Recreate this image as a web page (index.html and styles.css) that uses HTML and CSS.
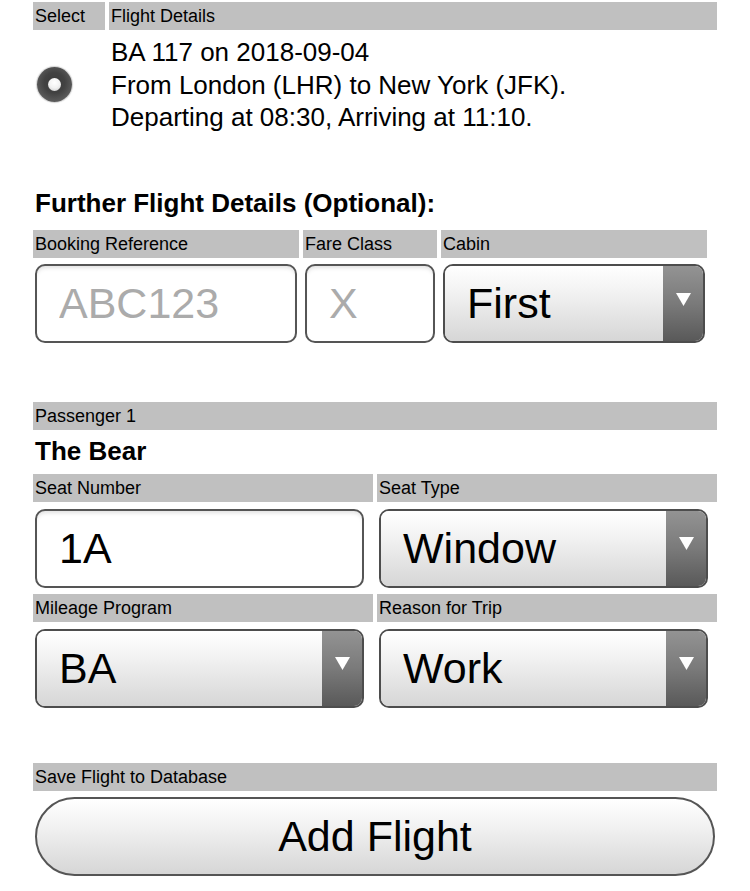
FILE: index.html
```html
<!DOCTYPE html>
<html>
<head>
<meta charset="utf-8">
<title>Add Flight</title>
<link rel="stylesheet" href="styles.css">
</head>
<body>
<div class="page">
  <div class="flight-table">
    <div class="label">Select</div>
    <div class="label">Flight Details</div>
    <div class="radio-cell"><span class="radio"><span class="radio-dot"></span></span></div>
    <div class="flight-text">BA 117 on 2018-09-04<br>From London (LHR) to New York (JFK).<br>Departing at 08:30, Arriving at 11:10.</div>
  </div>

  <h2 class="heading">Further Flight Details (Optional):</h2>
  <div class="further-grid">
    <div class="label">Booking Reference</div>
    <div class="label">Fare Class</div>
    <div class="label">Cabin</div>
    <div class="field"><input class="text-input" type="text" placeholder="ABC123"></div>
    <div class="field"><input class="text-input" type="text" placeholder="X"></div>
    <div class="field">
      <div class="select"><span class="select-value">First</span><span class="select-arrow"><svg width="15" height="13" viewBox="0 0 15 13"><polygon points="0,0 15,0 7.5,13" fill="#fff"/></svg></span></div>
    </div>
  </div>

  <div class="label passenger-bar">Passenger 1</div>
  <div class="passenger-name">The Bear</div>
  <div class="passenger-grid">
    <div class="label">Seat Number</div>
    <div class="label">Seat Type</div>
    <div class="field wide"><input class="text-input filled" type="text" value="1A"></div>
    <div class="field wide">
      <div class="select"><span class="select-value">Window</span><span class="select-arrow"><svg width="15" height="13" viewBox="0 0 15 13"><polygon points="0,0 15,0 7.5,13" fill="#fff"/></svg></span></div>
    </div>
    <div class="label">Mileage Program</div>
    <div class="label">Reason for Trip</div>
    <div class="field wide">
      <div class="select"><span class="select-value">BA</span><span class="select-arrow"><svg width="15" height="13" viewBox="0 0 15 13"><polygon points="0,0 15,0 7.5,13" fill="#fff"/></svg></span></div>
    </div>
    <div class="field wide">
      <div class="select"><span class="select-value">Work</span><span class="select-arrow"><svg width="15" height="13" viewBox="0 0 15 13"><polygon points="0,0 15,0 7.5,13" fill="#fff"/></svg></span></div>
    </div>
  </div>

  <div class="label save-bar">Save Flight to Database</div>
  <button class="add-button" type="button">Add Flight</button>
</div>
</body>
</html>
```

FILE: styles.css
```css
html, body {
  margin: 0;
  padding: 0;
  background: #ffffff;
}

body {
  font-family: "Liberation Sans", Helvetica, Arial, sans-serif;
  color: #000;
}

.page {
  width: 684px;
  padding: 2px 0 0 33px;
}

.label {
  background: #c0c0c0;
  height: 28px;
  line-height: 28px;
  font-size: 18px;
  padding-left: 2px;
  white-space: nowrap;
  overflow: hidden;
}

.flight-table {
  display: grid;
  grid-template-columns: 72px 608px;
  column-gap: 4px;
}

.radio-cell {
  display: flex;
  align-items: center;
  padding-top: 6px;
  padding-left: 4px;
}

.radio {
  width: 35px;
  height: 35px;
  border-radius: 50%;
  background: radial-gradient(circle at 50% 45%, #3a3a3a 0%, #424242 40%, #5e5e5e 75%, #808080 100%);
  box-shadow: 0 0 1px 1px rgba(190, 190, 190, 0.7);
  display: flex;
  align-items: center;
  justify-content: center;
}

.radio-dot {
  width: 13px;
  height: 13px;
  border-radius: 50%;
  background: radial-gradient(circle at 50% 35%, #ffffff 0%, #f2f2f2 50%, #c8c8c8 100%);
}

.flight-text {
  padding: 6px 0 0 2px;
  font-size: 26px;
  line-height: 32.5px;
}

.heading {
  margin: 53px 0 0 0;
  padding-left: 2px;
  font-size: 26px;
  font-weight: bold;
  line-height: 32.5px;
}

.further-grid {
  margin-top: 11px;
  display: grid;
  grid-template-columns: 266px 134px 266px;
  column-gap: 4px;
  row-gap: 6px;
}

.field {
  padding: 0 2px;
}

.field.wide {
  padding: 0 9px 0 2px;
}

.text-input {
  display: block;
  width: 100%;
  height: 79px;
  box-sizing: border-box;
  margin: 0;
  border: 2px solid #555;
  border-radius: 10px;
  padding: 0 0 0 22px;
  font-family: "Liberation Sans", Helvetica, Arial, sans-serif;
  font-size: 43px;
  color: #000;
  background: #fff;
  box-shadow: inset 0 4px 4px -2px rgba(0, 0, 0, 0.12);
  outline: none;
}

.text-input::placeholder {
  color: #ababab;
}

.select {
  display: flex;
  height: 79px;
  box-sizing: border-box;
  border: 2px solid #4d4d4d;
  border-radius: 10px;
  overflow: hidden;
}

.select-value {
  flex: 1;
  display: flex;
  align-items: center;
  padding-left: 22px;
  font-size: 43px;
  line-height: 1;
  background: linear-gradient(#ffffff 0%, #f2f2f2 35%, #d6d6d6 100%);
}

.select-arrow {
  width: 40px;
  display: flex;
  align-items: center;
  justify-content: center;
  background: linear-gradient(#939393 0%, #7a7a7a 50%, #595959 100%);
}

.select-arrow svg {
  display: block;
  margin-bottom: 9px;
}

.passenger-bar {
  margin-top: 59px;
}

.passenger-name {
  margin-top: 5px;
  padding-left: 2px;
  font-size: 26px;
  font-weight: bold;
  line-height: 32px;
}

.passenger-grid {
  margin-top: 7px;
  display: grid;
  grid-template-columns: 340px 340px;
  column-gap: 4px;
  row-gap: 6.5px;
}

.save-bar {
  margin-top: 55px;
}

.add-button {
  display: block;
  margin: 6px 0 0 2px;
  width: 680px;
  height: 79px;
  box-sizing: border-box;
  border: 2px solid #555;
  border-radius: 40px;
  background: linear-gradient(#ffffff 0%, #f0f0f0 40%, #d6d6d6 100%);
  font-family: "Liberation Sans", Helvetica, Arial, sans-serif;
  font-size: 43px;
  color: #000;
  padding: 0;
}
```
